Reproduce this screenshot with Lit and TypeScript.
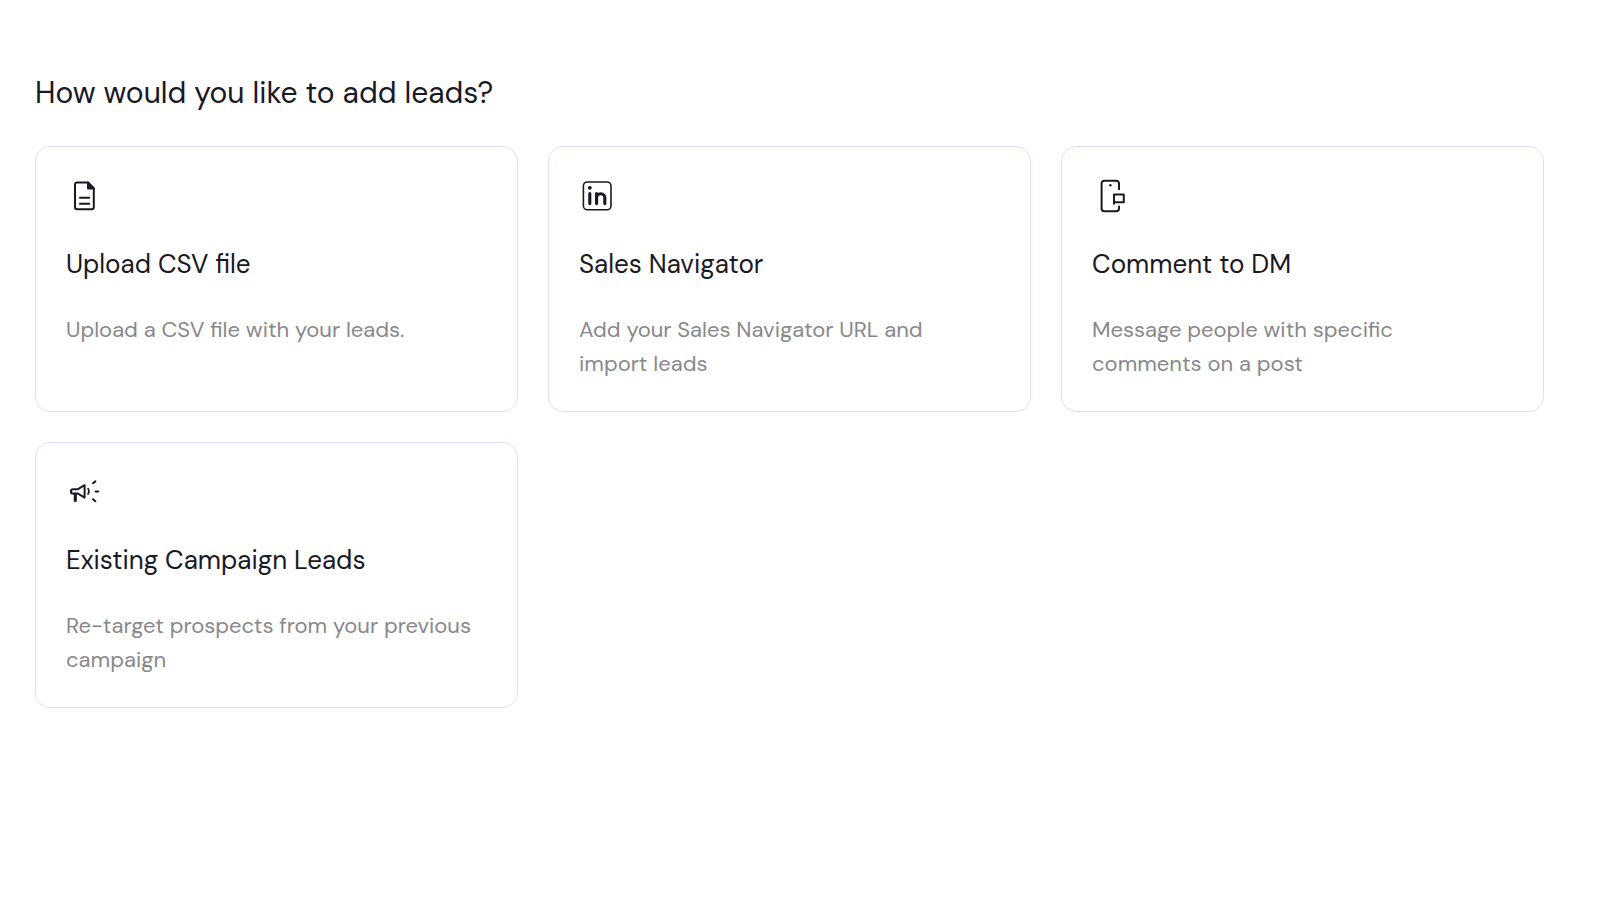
import { LitElement, html, svg, css, type TemplateResult } from "lit";
import { customElement, property } from "lit/decorators.js";

type IconName = "file" | "linkedin" | "phone" | "megaphone";

interface LeadSource {
  icon: IconName;
  title: string;
  text: string;
}

const SOURCES: LeadSource[] = [
  { icon: "file", title: "Upload CSV file", text: "Upload a CSV file with your leads." },
  { icon: "linkedin", title: "Sales Navigator", text: "Add your Sales Navigator URL and\nimport leads" },
  { icon: "phone", title: "Comment to DM", text: "Message people with specific\ncomments on a post" },
  { icon: "megaphone", title: "Existing Campaign Leads", text: "Re-target prospects from your previous\ncampaign" },
];

const ICONS: Record<IconName, TemplateResult> = {
  file: svg`
    <path d="M22 5.4H11a2 2 0 0 0-2 2v22.8a2 2 0 0 0 2 2h14.8a2 2 0 0 0 2-2V11.2z" />
    <path class="solid" d="M21 4.8v6.4a1.4 1.4 0 0 0 1.4 1.4h6.4v-1.4L22.6 4.8z" />
    <path d="M14 20.8h9.2M14 26.8h9.2" />`,
  linkedin: svg`
    <rect class="thin" x="4.4" y="5" width="27.6" height="27.8" rx="4" />
    <circle class="solid" cx="10.8" cy="10.8" r="1.9" />
    <path class="bold" d="M10.8 16.6v10M17.6 16.6v10M17.6 20.8c0-2.4 1.7-4 4.1-4s4.1 1.6 4.1 4v5.8" />`,
  phone: svg`
    <path d="M27 12.2V6.5a2.8 2.8 0 0 0-2.8-2.8H12.4a2.8 2.8 0 0 0-2.8 2.8v24.9a2.8 2.8 0 0 0 2.8 2.8h11.8a2.8 2.8 0 0 0 2.8-2.8v-2" />
    <circle class="solid" cx="18.4" cy="8.2" r="1.2" />
    <path d="M22 26.8V17.4h9.8v7.8H22.4" />`,
  megaphone: svg`
    <path d="M12 16.2H7.1a2.2 2.2 0 0 0 0 4.4H12l6.6 4V12.2z" />
    <path class="bold" d="M9.3 21.4v6" />
    <path class="thin" d="M22 15.6c1.2 1.6 1.2 4 0 5.6" />
    <path d="M27 10.2 29.4 8.4M29.6 18.4h2.6M27 26.2l2.4 2" />`,
};

@customElement("lead-card")
export class LeadCard extends LitElement {
  @property({ attribute: false }) source!: LeadSource;

  static styles = css`
    :host {
      display: grid;
    }
    .card {
      display: flex;
      flex-direction: column;
      align-items: flex-start;
      gap: 32px;
      margin: 0;
      padding: 30px;
      border: 1px solid #d9e0ff;
      border-radius: 15px;
      background: #fff;
      font: inherit;
      color: #191925;
      line-height: 34px;
      text-align: left;
      cursor: pointer;
    }
    .card:hover {
      border-color: #a9b4fa;
    }
    .icon {
      display: block;
      width: 38px;
      height: 38px;
      fill: none;
      stroke: currentColor;
      stroke-width: 2;
      stroke-linecap: round;
      stroke-linejoin: round;
    }
    .thin {
      stroke-width: 1.6;
    }
    .bold {
      stroke-width: 3.1;
    }
    .solid {
      fill: currentColor;
      stroke: none;
    }
    .title {
      font-size: 26px;
    }
    .text {
      font-size: 22px;
      color: #88888c;
      white-space: pre-line;
    }
  `;

  render() {
    const { icon, title, text } = this.source;
    return html`<button class="card" type="button">
      <svg class="icon" viewBox="0 0 38 38" aria-hidden="true">${ICONS[icon]}</svg>
      <span class="title">${title}</span>
      <span class="text">${text}</span>
    </button>`;
  }
}

@customElement("app-root")
export class AppRoot extends LitElement {
  static styles = css`
    :host {
      display: block;
      box-sizing: border-box;
      min-height: 100vh;
      padding: 73px 56px 40px 35px;
      background: #fff;
      color: #191925;
      font-family: "DM Sans", "Open Sans", sans-serif;
    }
    .heading {
      margin: 0 0 33px;
      font-size: 30px;
      font-weight: 400;
      line-height: 40px;
    }
    .cards {
      display: grid;
      grid-template-columns: repeat(3, minmax(0, 1fr));
      gap: 30px;
    }
  `;

  render() {
    return html`
      <h1 class="heading">How would you like to add leads?</h1>
      <div class="cards">
        ${SOURCES.map((source) => html`<lead-card .source=${source}></lead-card>`)}
      </div>
    `;
  }
}
